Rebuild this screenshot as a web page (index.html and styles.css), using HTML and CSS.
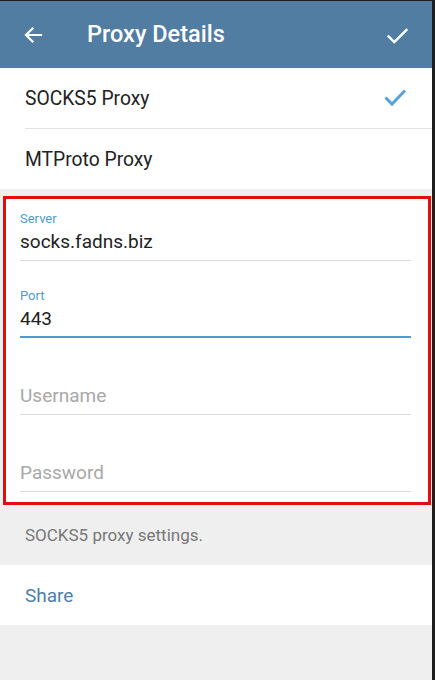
FILE: index.html
```html
<!DOCTYPE html>
<html lang="en">
<head>
<meta charset="utf-8">
<title>Proxy Details</title>
<link rel="stylesheet" href="styles.css">
</head>
<body>
<div class="screen">
  <header class="appbar">
    <svg class="icon back" viewBox="0 0 24 24" width="24" height="24"><path d="M20 12H5M11.5 5.5L5 12l6.5 6.5" fill="none" stroke="#fff" stroke-width="2.2" stroke-linecap="square"/></svg>
    <h1 class="title">Proxy Details</h1>
    <svg class="icon done" viewBox="0 0 24 24" width="26" height="26"><path d="M3.5 12.5l6 6L21.5 6.5" fill="none" stroke="#fff" stroke-width="2.2"/></svg>
  </header>

  <section class="types">
    <div class="type-row">
      <span>SOCKS5 Proxy</span>
      <svg class="check" viewBox="0 0 24 24" width="24" height="24"><path d="M2.5 12.5l6.5 6.5L22 5.5" fill="none" stroke="#58a2dc" stroke-width="3"/></svg>
    </div>
    <div class="type-row last"><span>MTProto Proxy</span></div>
  </section>

  <section class="fields">
    <div class="field">
      <div class="label">Server</div>
      <div class="value">socks.fadns.biz</div>
    </div>
    <div class="field focused">
      <div class="label">Port</div>
      <div class="value">443</div>
    </div>
    <div class="field">
      <div class="label"></div>
      <div class="value placeholder">Username</div>
    </div>
    <div class="field">
      <div class="label"></div>
      <div class="value placeholder">Password</div>
    </div>
  </section>

  <p class="info">SOCKS5 proxy settings.</p>

  <section class="share"><span>Share</span></section>
</div>
</body>
</html>
```

FILE: styles.css
```css
html, body {
  margin: 0;
  padding: 0;
}
body {
  background: #1e1e1e;
  height: 680px;
  overflow: hidden;
  font-family: Roboto, "Noto Sans", "Liberation Sans", sans-serif;
}
.screen {
  width: 432px;
  height: 679px;
  margin-top: 1px;
  background: #efefef;
  display: flex;
  flex-direction: column;
}
.appbar {
  height: 67px;
  background: #527da3;
  display: flex;
  align-items: center;
  padding: 0 0 0 21px;
  box-sizing: border-box;
}
.back {
  flex: none;
}
.title {
  margin: 0 0 0 42px;
  font-size: 23.5px;
  font-weight: 500;
  color: #fff;
  flex: 1;
  line-height: 1;
}
.done {
  margin-right: 22px;
}
.types {
  background: #fff;
  padding-left: 25px;
}
.type-row {
  height: 60px;
  display: flex;
  align-items: center;
  justify-content: space-between;
  font-size: 19.3px;
  color: #222;
  border-bottom: 1px solid #e3e3e3;
  padding-right: 25px;
}
.type-row.last {
  border-bottom: none;
}
.check {
  margin-top: -2px;
}
.fields {
  margin: 7px 1px 0 3px;
  border: 3px solid #e30d0d;
  background: #fff;
  padding: 12px 17px 10px 14px;
  display: flex;
  flex-direction: column;
  gap: 27px;
}
.field {
  border-bottom: 1px solid #dcdcdc;
  padding-bottom: 6px;
}
.field.focused {
  border-bottom: 2px solid #4a9dd2;
  padding-bottom: 5px;
}
.label {
  font-size: 13px;
  line-height: 16px;
  height: 16px;
  color: #4f9ccb;
  margin-bottom: 3px;
}
.value {
  font-size: 19px;
  line-height: 24px;
  color: #222;
}
.value.placeholder {
  color: #a8a8a8;
}
.info {
  margin: 0;
  padding: 20px 25px 20px;
  font-size: 17px;
  line-height: 20px;
  color: #777;
}
.share {
  background: #fff;
  height: 60px;
  display: flex;
  align-items: center;
  padding-left: 25px;
  font-size: 19px;
  color: #4c7fab;
}
```
